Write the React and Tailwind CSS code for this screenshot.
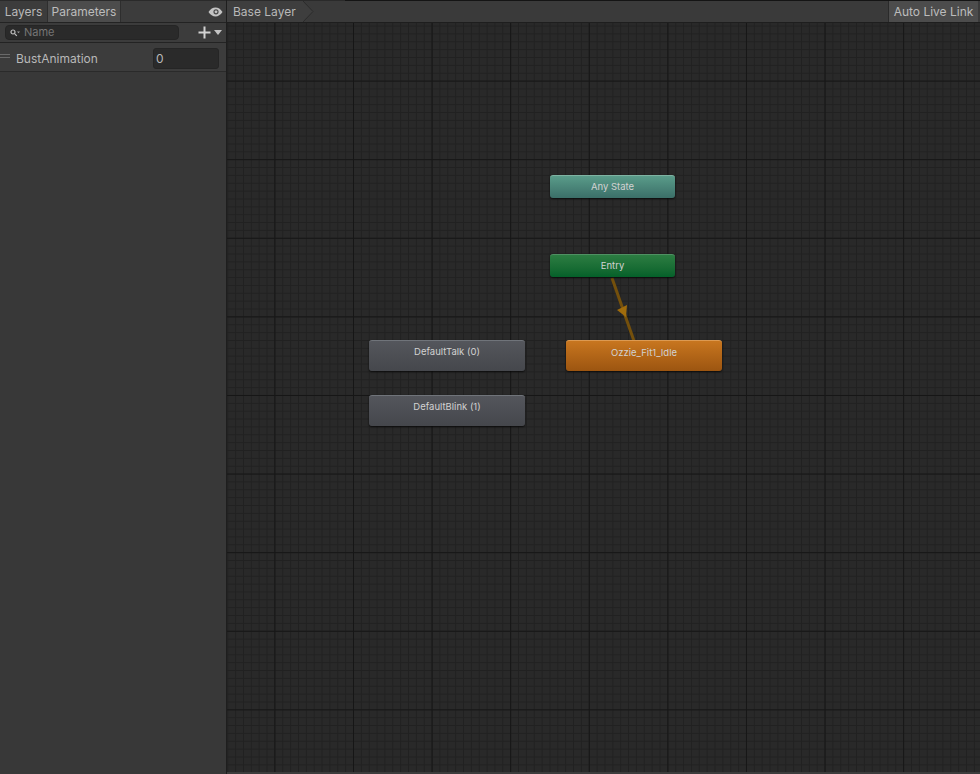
function Node({ className, label }) {
  return (
    <div
      className={`absolute flex justify-center rounded-[3px] text-[9.5px] text-[#d2d2d2] shadow-[0_1px_2px_rgba(0,0,0,0.7)] ${className}`}
    >
      <span>{label}</span>
    </div>
  );
}

function EyeIcon() {
  return (
    <svg width="15" height="10" viewBox="0 0 15 10" className="block">
      <path d="M0.5 5C2.5 2 4.8 0.6 7.5 0.6S12.5 2 14.5 5C12.5 8 10.2 9.4 7.5 9.4S2.5 8 0.5 5Z" fill="#c4c4c4" />
      <circle cx="8" cy="4.8" r="2.6" fill="#4a4a4a" />
      <circle cx="8" cy="4.8" r="1.4" fill="#c4c4c4" />
    </svg>
  );
}

function SearchIcon() {
  return (
    <svg width="10" height="8" viewBox="0 0 10 8" className="block">
      <circle cx="3" cy="3" r="2" fill="none" stroke="#c0c0c0" strokeWidth="1.2" />
      <path d="M4.6 4.6L6.8 6.8" stroke="#c0c0c0" strokeWidth="1.2" />
      <path d="M7 2.5H10L8.5 4.2Z" fill="#a0a0a0" />
    </svg>
  );
}

function LeftPanel() {
  return (
    <aside className="flex w-[227px] shrink-0 flex-col border-r border-[#1e1e1e] bg-[#383838]">
      <div className="flex h-[23px] items-stretch border-t border-b border-t-[#2a2a2a] border-b-[#232323] bg-[#3c3c3c] pr-[3px] text-[12px]">
        <div className="flex w-[47px] items-center justify-center pt-[1px] text-[#b8b8b8]">Layers</div>
        <div className="flex w-[74px] items-center justify-center border-x border-[#2e2e2e] bg-[#4c4c4c] pt-[1px] text-[#bcbcbc]">
          Parameters
        </div>
        <div className="ml-auto flex items-center pt-[1px]">
          <EyeIcon />
        </div>
      </div>
      <div className="flex h-[20px] items-center border-b border-[#232323] bg-[#3c3c3c] pl-[5px] pr-[4px]">
        <div className="flex h-[15px] w-[174px] items-center gap-[4px] rounded-[4px] border border-[#252525] bg-[#2a2a2a] pl-[4px] text-[11px] text-[#757575]">
          <SearchIcon />
          <span>Name</span>
        </div>
        <div className="ml-auto flex items-center gap-[3px]">
          <svg width="13" height="13" viewBox="0 0 13 13" className="block">
            <path d="M6.5 0.5V12.5M0.5 6.5H12.5" stroke="#d2d2d2" strokeWidth="2" />
          </svg>
          <svg width="8" height="5" viewBox="0 0 8 5" className="block">
            <path d="M0 0H8L4 5Z" fill="#c4c4c4" />
          </svg>
        </div>
      </div>
      <div className="flex h-[29px] items-center border-b border-[#2a2a2a] bg-[#3c3c3c] pt-[3px] pr-[7px] text-[12px] text-[#b8b8b8]">
        <div className="mb-[6px] h-[4px] w-[10px] shrink-0 border-y border-[#6a6a6a]" />
        <span className="ml-[6px]">BustAnimation</span>
        <div className="ml-auto flex h-[21px] w-[66px] items-center rounded-[3px] border border-[#252525] bg-[#2a2a2a] pl-[2px]">
          0
        </div>
      </div>
    </aside>
  );
}

function TopBar() {
  return (
    <div className="relative flex h-[23px] shrink-0 items-stretch border-t border-b border-t-[#2a2a2a] border-b-[#1e1e1e] bg-[#3a3a3a] pr-[2px] text-[12px] text-[#b8b8b8]">
      {/* darker strip along the top, only right of the breadcrumb */}
      <div className="absolute -top-px left-[118px] right-0 h-px bg-[#141414]" />
      <div className="flex items-center bg-[#3e3e3e] pl-[6px] pr-[7px] pt-[1px]">Base Layer</div>
      <svg width="11" height="21" viewBox="0 0 11 21" className="block">
        <path d="M0 0L10 10.5L0 21Z" fill="#3e3e3e" />
        <path d="M0 0L10 10.5L0 21" fill="none" stroke="#2c2c2c" />
      </svg>
      <div className="ml-auto flex w-[90px] items-center justify-center border-l border-[#2a2a2a] bg-[#4c4c4c] pt-[1px] text-[#bcbcbc]">
        Auto Live Link
      </div>
    </div>
  );
}

function Canvas() {
  return (
    <div className="relative flex-1 overflow-hidden border-b-[2px] border-[#3c3c3c] bg-[#292929] bg-[image:linear-gradient(to_right,#161616_1px,transparent_1px),linear-gradient(to_bottom,#161616_1px,transparent_1px),linear-gradient(to_right,#212121_1px,transparent_1px),linear-gradient(to_bottom,#212121_1px,transparent_1px)] bg-[length:78.6px_78.6px,78.6px_78.6px,7.86px_7.86px,7.86px_7.86px] bg-[position:47.4px_57.6px,47.4px_57.6px,47.4px_57.6px,47.4px_57.6px]">
      <svg className="absolute left-0 top-0" width="753" height="751">
        <path d="M385 255L407 318" stroke="#74500c" strokeWidth="3" />
        <path d="M390 287L400 282L399 294Z" fill="#a06c0c" />
      </svg>
      <Node
        className="left-[323px] top-[152px] h-[23px] w-[125px] border-t border-[#7fb3a3] bg-gradient-to-b from-[#5a9c8a] to-[#3b6f68] pt-[4px]"
        label="Any State"
      />
      <Node
        className="left-[323px] top-[231px] h-[23px] w-[125px] border-t border-[#4f9062] bg-gradient-to-b from-[#2c7d42] to-[#04612a] pt-[4px]"
        label="Entry"
      />
      <Node
        className="left-[339px] top-[317px] h-[31px] w-[156px] border-t border-[#dc9a52] bg-gradient-to-b from-[#c8761f] to-[#9c5510] pt-[5px]"
        label="Ozzie_Fit1_Idle"
      />
      <Node
        className="left-[142px] top-[317px] h-[31px] w-[156px] border-t border-[#70747a] bg-gradient-to-b from-[#54565c] to-[#45474c] pt-[4px]"
        label="DefaultTalk (0)"
      />
      <Node
        className="left-[142px] top-[372px] h-[31px] w-[156px] border-t border-[#70747a] bg-gradient-to-b from-[#54565c] to-[#45474c] pt-[4px]"
        label="DefaultBlink (1)"
      />
    </div>
  );
}

export default function App() {
  return (
    <div className="flex h-[774px] w-[980px] overflow-hidden bg-[#383838] font-['Inter','Liberation_Sans',sans-serif]">
      <LeftPanel />
      <main className="flex min-w-0 flex-1 flex-col">
        <TopBar />
        <Canvas />
      </main>
    </div>
  );
}
